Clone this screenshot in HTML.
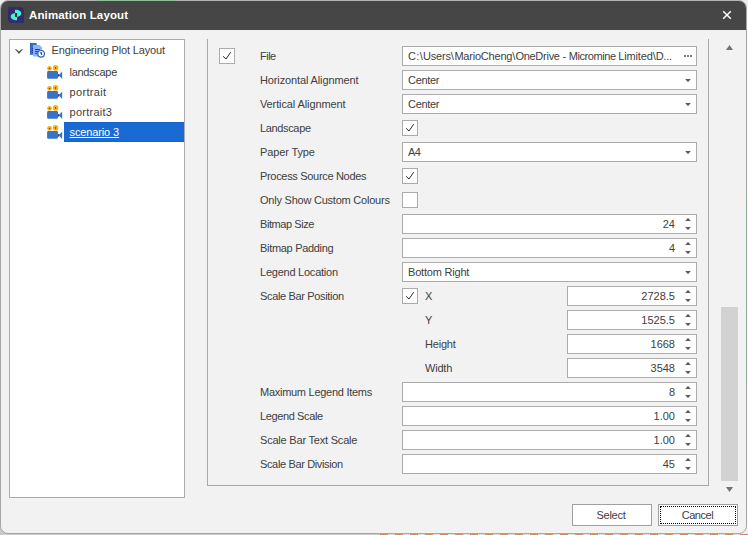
<!DOCTYPE html><html><head><meta charset="utf-8"><title>Animation Layout</title><style>
*{box-sizing:border-box;margin:0;padding:0}
html,body{width:748px;height:535px;overflow:hidden;background:#d6d6d6}
body{background:linear-gradient(#ededed 0,#ededed 60%,#cbcbcb 100%)}
body{position:relative;font-family:"Liberation Sans",sans-serif;font-size:11px;color:#404040}
.abs{position:absolute}
#win{position:absolute;left:0;top:0;width:747px;height:534px;border:1px solid #a6a6a6;border-radius:8px;background:#f2f2f2;overflow:hidden}
#title{position:absolute;left:0;top:0;width:745px;height:29px;background:#464646}
#title .t{position:absolute;left:28px;top:7px;font-weight:bold;font-size:11.5px;color:#fff;white-space:nowrap;line-height:14px}
.lbl{position:absolute;white-space:nowrap;line-height:14px;height:14px}
.inp{position:absolute;height:20px;border:1px solid #ababab;background:#fff}
.inp .v{position:absolute;top:2px;line-height:14px;white-space:nowrap}
.cb{position:absolute;width:16px;height:16px;border:1px solid #ababab;background:#fff}
.btn{position:absolute;height:22px;width:80px;border:1px solid #a0a0a0;background:#fff;text-align:center;line-height:20px}
</style></head><body>
<div class="abs" style="left:736px;top:522px;width:12px;height:13px;background:#f3f1ef"></div>
<div class="abs" style="left:736px;top:0;width:12px;height:12px;background:#ececec"></div>
<div id="win">
<div id="title"><svg class="abs" style="left:7px;top:6px" width="16" height="16" viewBox="0 0 16 16"><path d="M0 0H14L16 2V16H2L0 14Z" fill="#352a6a"/><path d="M7 2.800C10 2.600 13.400 4.200 13.300 6.600C13.200 8.600 11 9.600 9.100 10V6.100H7Z" fill="#4cf0cc"/><path d="M9.100 13.200C6 13.400 2.600 11.800 2.700 9.400C2.800 7.400 5 6.400 7 6V9.900H9.100Z" fill="#4cf0cc"/></svg><div class="t" style="letter-spacing:0.130px">Animation Layout</div>
<svg class="abs" style="left:721px;top:9px" width="10" height="10" viewBox="0 0 10 10"><path d="M1.200 1.200L8.800 8.800M8.800 1.200L1.200 8.800" stroke="#fff" stroke-width="1.500" fill="none"/></svg></div>
<div class="abs" id="tree" style="left:8px;top:38px;width:176px;height:459px;border:1px solid #ababab;background:#fff"></div>
<svg class="abs" style="left:13px;top:46px" width="10" height="8" viewBox="0 0 10 8"><path d="M1 2.200L2 1.900L5 4.600L8 1.900L9 2.200L5 6.900Z" fill="#555"/></svg>
<svg class="abs" style="left:29px;top:42px" width="16" height="16" viewBox="0 0 16 16"><path d="M0 0H6L6.800 .8V11.800H0Z" fill="#3470c6"/><path d="M0 0H1V11.800H0Z" fill="#2c62c0"/><path d="M2 5h1v1h-1zM2 7h1v1h-1zM2 9h1v1h-1z" fill="#1a2fa0"/><path d="M3 1.900H9.500L12 4.500V13.600H3Z" fill="#89b3f8"/><path d="M5 6.500H9.800M5 8.400H8.500M5 10.300H7.800" stroke="#1c3faa" stroke-width="1"/><circle cx="11.100" cy="10.800" r="3.300" fill="#fff" stroke="#2d64c2" stroke-width="1.200"/><path d="M11 9L11.100 10.500L11.900 11.600" stroke="#222" stroke-width="1.100" fill="none"/></svg>
<div class="lbl" style="left:50.5px;top:42px;letter-spacing:-0.145px">Engineering Plot Layout</div>
<svg class="abs" style="left:46px;top:64px" width="16" height="15" viewBox="0 0 16 15"><circle cx="2.500" cy="3.400" r="2.400" fill="#fdb10f"/><circle cx="8.600" cy="2.900" r="2.800" fill="#fdb10f"/><circle cx="2.500" cy="3.400" r=".75" fill="#2b4f8c"/><rect x="8" y="2.100" width="1.100" height="1.700" fill="#2b4f8c"/><rect x="0.100" y="6" width="10.900" height="7.800" rx="1.400" fill="#3873c8"/><rect x="11" y="9.100" width="1.300" height="2.500" fill="#27406b"/><path d="M11.700 10.300L15.200 6.600V14Z" fill="#3873c8"/></svg>
<div class="lbl" style="left:68.5px;top:64px;letter-spacing:-0.3px">landscape</div>
<svg class="abs" style="left:46px;top:84px" width="16" height="15" viewBox="0 0 16 15"><circle cx="2.500" cy="3.400" r="2.400" fill="#fdb10f"/><circle cx="8.600" cy="2.900" r="2.800" fill="#fdb10f"/><circle cx="2.500" cy="3.400" r=".75" fill="#2b4f8c"/><rect x="8" y="2.100" width="1.100" height="1.700" fill="#2b4f8c"/><rect x="0.100" y="6" width="10.900" height="7.800" rx="1.400" fill="#3873c8"/><rect x="11" y="9.100" width="1.300" height="2.500" fill="#27406b"/><path d="M11.700 10.300L15.200 6.600V14Z" fill="#3873c8"/></svg>
<div class="lbl" style="left:68.5px;top:84px;letter-spacing:0.343px">portrait</div>
<svg class="abs" style="left:46px;top:104px" width="16" height="15" viewBox="0 0 16 15"><circle cx="2.500" cy="3.400" r="2.400" fill="#fdb10f"/><circle cx="8.600" cy="2.900" r="2.800" fill="#fdb10f"/><circle cx="2.500" cy="3.400" r=".75" fill="#2b4f8c"/><rect x="8" y="2.100" width="1.100" height="1.700" fill="#2b4f8c"/><rect x="0.100" y="6" width="10.900" height="7.800" rx="1.400" fill="#3873c8"/><rect x="11" y="9.100" width="1.300" height="2.500" fill="#27406b"/><path d="M11.700 10.300L15.200 6.600V14Z" fill="#3873c8"/></svg>
<div class="lbl" style="left:68.5px;top:104px;letter-spacing:0.263px">portrait3</div>
<svg class="abs" style="left:46px;top:124px" width="16" height="15" viewBox="0 0 16 15"><circle cx="2.500" cy="3.400" r="2.400" fill="#fdb10f"/><circle cx="8.600" cy="2.900" r="2.800" fill="#fdb10f"/><circle cx="2.500" cy="3.400" r=".75" fill="#2b4f8c"/><rect x="8" y="2.100" width="1.100" height="1.700" fill="#2b4f8c"/><rect x="0.100" y="6" width="10.900" height="7.800" rx="1.400" fill="#3873c8"/><rect x="11" y="9.100" width="1.300" height="2.500" fill="#27406b"/><path d="M11.700 10.300L15.200 6.600V14Z" fill="#3873c8"/></svg>
<div class="abs" style="left:63px;top:121px;width:120px;height:20px;background:#1a6ad4;border-top:1px solid #1763cb;border-bottom:1px solid #1763cb"></div>
<div class="lbl" style="left:68.5px;top:124px;color:#fff;text-decoration:underline;letter-spacing:-0.122px">scenario 3</div>
<div class="abs" style="left:206px;top:38px;width:502px;height:447px;border:1px solid #a8a8a8;border-top:none"></div>
<div class="cb" style="left:218px;top:47px"><svg class="abs" style="left:0;top:0" width="14" height="14" viewBox="0 0 14 14"><path d="M3.100 7.300L6 10L10.700 3.200" stroke="#2a2a2a" stroke-width="1" fill="none"/></svg></div>
<div class="lbl" style="left:259px;top:48px;letter-spacing:-0.5px">File</div>
<div class="lbl" style="left:259px;top:72px;letter-spacing:-0.126px">Horizontal Alignment</div>
<div class="lbl" style="left:259px;top:96px;letter-spacing:-0.112px">Vertical Alignment</div>
<div class="lbl" style="left:259px;top:120px;letter-spacing:-0.35px">Landscape</div>
<div class="lbl" style="left:259px;top:144px;letter-spacing:-0.122px">Paper Type</div>
<div class="lbl" style="left:259px;top:168px;letter-spacing:-0.316px">Process Source Nodes</div>
<div class="lbl" style="left:259px;top:192px;letter-spacing:-0.226px">Only Show Custom Colours</div>
<div class="lbl" style="left:259px;top:216px;letter-spacing:-0.42px">Bitmap Size</div>
<div class="lbl" style="left:259px;top:240px;letter-spacing:-0.308px">Bitmap Padding</div>
<div class="lbl" style="left:259px;top:264px;letter-spacing:-0.236px">Legend Location</div>
<div class="lbl" style="left:259px;top:288px;letter-spacing:-0.341px">Scale Bar Position</div>
<div class="lbl" style="left:259px;top:384px;letter-spacing:-0.274px">Maximum Legend Items</div>
<div class="lbl" style="left:259px;top:408px;letter-spacing:-0.382px">Legend Scale</div>
<div class="lbl" style="left:259px;top:432px;letter-spacing:-0.205px">Scale Bar Text Scale</div>
<div class="lbl" style="left:259px;top:456px;letter-spacing:-0.359px">Scale Bar Division</div>
<div class="inp" style="left:401px;top:45px;width:295px"><div class="v" style="left:5px"><span style="letter-spacing:0.33px">C:\</span><span style="letter-spacing:-0.21px">Users</span><span style="letter-spacing:0.6px">\</span><span style="letter-spacing:-0.21px">MarioCheng</span><span style="letter-spacing:0.1px">\</span><span style="letter-spacing:-0.265px">OneDrive - </span><span style="letter-spacing:-0.42px">Micromine </span><span style="letter-spacing:-0.15px">Limited\</span><span style="letter-spacing:-0.21px">D...</span></div><svg class="abs" style="left:281px;top:8px" width="9" height="2" viewBox="0 0 9 2"><path d="M0 0h2v2h-2zM3 0h2v2h-2zM6 0h2v2h-2z" fill="#7a7a7a"/></svg></div>
<div class="inp" style="left:401px;top:69px;width:295px"><div class="v" style="left:5px;letter-spacing:-0.3px">Center</div><svg class="abs" style="left:282px;top:8px" width="6" height="3" viewBox="0 0 6 3"><path d="M.1 0H5.900L3 3.100Z" fill="#5c5c5c"/></svg></div>
<div class="inp" style="left:401px;top:93px;width:295px"><div class="v" style="left:5px;letter-spacing:-0.3px">Center</div><svg class="abs" style="left:282px;top:8px" width="6" height="3" viewBox="0 0 6 3"><path d="M.1 0H5.900L3 3.100Z" fill="#5c5c5c"/></svg></div>
<div class="cb" style="left:401px;top:119px"><svg class="abs" style="left:0;top:0" width="14" height="14" viewBox="0 0 14 14"><path d="M3.100 7.300L6 10L10.700 3.200" stroke="#2a2a2a" stroke-width="1" fill="none"/></svg></div>
<div class="inp" style="left:401px;top:141px;width:295px"><div class="v" style="left:5px;letter-spacing:-0.6px">A4</div><svg class="abs" style="left:282px;top:8px" width="6" height="3" viewBox="0 0 6 3"><path d="M.1 0H5.900L3 3.100Z" fill="#5c5c5c"/></svg></div>
<div class="cb" style="left:401px;top:167px"><svg class="abs" style="left:0;top:0" width="14" height="14" viewBox="0 0 14 14"><path d="M3.100 7.300L6 10L10.700 3.200" stroke="#2a2a2a" stroke-width="1" fill="none"/></svg></div>
<div class="cb" style="left:401px;top:191px"></div>
<div class="inp" style="left:401px;top:213px;width:295px"><div class="v" style="right:21px;letter-spacing:0">24</div><svg class="abs" style="left:282px;top:3px" width="6" height="3" viewBox="0 0 6 3"><path d="M.1 3H5.900L3 -.1Z" fill="#5c5c5c"/></svg><svg class="abs" style="left:282px;top:12px" width="6" height="3" viewBox="0 0 6 3"><path d="M.1 0H5.900L3 3.100Z" fill="#5c5c5c"/></svg></div>
<div class="inp" style="left:401px;top:237px;width:295px"><div class="v" style="right:21px;letter-spacing:0">4</div><svg class="abs" style="left:282px;top:3px" width="6" height="3" viewBox="0 0 6 3"><path d="M.1 3H5.900L3 -.1Z" fill="#5c5c5c"/></svg><svg class="abs" style="left:282px;top:12px" width="6" height="3" viewBox="0 0 6 3"><path d="M.1 0H5.900L3 3.100Z" fill="#5c5c5c"/></svg></div>
<div class="inp" style="left:401px;top:261px;width:295px"><div class="v" style="left:5px;letter-spacing:-0.2px">Bottom Right</div><svg class="abs" style="left:282px;top:8px" width="6" height="3" viewBox="0 0 6 3"><path d="M.1 0H5.900L3 3.100Z" fill="#5c5c5c"/></svg></div>
<div class="cb" style="left:401px;top:287px"><svg class="abs" style="left:0;top:0" width="14" height="14" viewBox="0 0 14 14"><path d="M3.100 7.300L6 10L10.700 3.200" stroke="#2a2a2a" stroke-width="1" fill="none"/></svg></div>
<div class="lbl" style="left:424px;top:288px;letter-spacing:-0.200px">X</div>
<div class="inp" style="left:566px;top:285px;width:130px"><div class="v" style="right:21px;letter-spacing:0">2728.5</div><svg class="abs" style="left:117px;top:3px" width="6" height="3" viewBox="0 0 6 3"><path d="M.1 3H5.900L3 -.1Z" fill="#5c5c5c"/></svg><svg class="abs" style="left:117px;top:12px" width="6" height="3" viewBox="0 0 6 3"><path d="M.1 0H5.900L3 3.100Z" fill="#5c5c5c"/></svg></div>
<div class="lbl" style="left:424px;top:312px;letter-spacing:-0.200px">Y</div>
<div class="inp" style="left:566px;top:309px;width:130px"><div class="v" style="right:21px;letter-spacing:0">1525.5</div><svg class="abs" style="left:117px;top:3px" width="6" height="3" viewBox="0 0 6 3"><path d="M.1 3H5.900L3 -.1Z" fill="#5c5c5c"/></svg><svg class="abs" style="left:117px;top:12px" width="6" height="3" viewBox="0 0 6 3"><path d="M.1 0H5.900L3 3.100Z" fill="#5c5c5c"/></svg></div>
<div class="lbl" style="left:424px;top:336px;letter-spacing:-0.200px">Height</div>
<div class="inp" style="left:566px;top:333px;width:130px"><div class="v" style="right:21px;letter-spacing:0">1668</div><svg class="abs" style="left:117px;top:3px" width="6" height="3" viewBox="0 0 6 3"><path d="M.1 3H5.900L3 -.1Z" fill="#5c5c5c"/></svg><svg class="abs" style="left:117px;top:12px" width="6" height="3" viewBox="0 0 6 3"><path d="M.1 0H5.900L3 3.100Z" fill="#5c5c5c"/></svg></div>
<div class="lbl" style="left:424px;top:360px;letter-spacing:-0.200px">Width</div>
<div class="inp" style="left:566px;top:357px;width:130px"><div class="v" style="right:21px;letter-spacing:0">3548</div><svg class="abs" style="left:117px;top:3px" width="6" height="3" viewBox="0 0 6 3"><path d="M.1 3H5.900L3 -.1Z" fill="#5c5c5c"/></svg><svg class="abs" style="left:117px;top:12px" width="6" height="3" viewBox="0 0 6 3"><path d="M.1 0H5.900L3 3.100Z" fill="#5c5c5c"/></svg></div>
<div class="inp" style="left:401px;top:381px;width:295px"><div class="v" style="right:21px;letter-spacing:0">8</div><svg class="abs" style="left:282px;top:3px" width="6" height="3" viewBox="0 0 6 3"><path d="M.1 3H5.900L3 -.1Z" fill="#5c5c5c"/></svg><svg class="abs" style="left:282px;top:12px" width="6" height="3" viewBox="0 0 6 3"><path d="M.1 0H5.900L3 3.100Z" fill="#5c5c5c"/></svg></div>
<div class="inp" style="left:401px;top:405px;width:295px"><div class="v" style="right:21px;letter-spacing:0">1.00</div><svg class="abs" style="left:282px;top:3px" width="6" height="3" viewBox="0 0 6 3"><path d="M.1 3H5.900L3 -.1Z" fill="#5c5c5c"/></svg><svg class="abs" style="left:282px;top:12px" width="6" height="3" viewBox="0 0 6 3"><path d="M.1 0H5.900L3 3.100Z" fill="#5c5c5c"/></svg></div>
<div class="inp" style="left:401px;top:429px;width:295px"><div class="v" style="right:21px;letter-spacing:0">1.00</div><svg class="abs" style="left:282px;top:3px" width="6" height="3" viewBox="0 0 6 3"><path d="M.1 3H5.900L3 -.1Z" fill="#5c5c5c"/></svg><svg class="abs" style="left:282px;top:12px" width="6" height="3" viewBox="0 0 6 3"><path d="M.1 0H5.900L3 3.100Z" fill="#5c5c5c"/></svg></div>
<div class="inp" style="left:401px;top:453px;width:295px"><div class="v" style="right:21px;letter-spacing:0">45</div><svg class="abs" style="left:282px;top:3px" width="6" height="3" viewBox="0 0 6 3"><path d="M.1 3H5.900L3 -.1Z" fill="#5c5c5c"/></svg><svg class="abs" style="left:282px;top:12px" width="6" height="3" viewBox="0 0 6 3"><path d="M.1 0H5.900L3 3.100Z" fill="#5c5c5c"/></svg></div>
<div class="abs" style="left:720px;top:306px;width:17px;height:174px;background:#d2d2d2"></div>
<svg class="abs" style="left:724px;top:44px" width="9" height="6" viewBox="0 0 9 6"><path d="M1 5L4.500 0L8 5z" fill="#727272"/></svg>
<svg class="abs" style="left:724px;top:486px" width="9" height="6" viewBox="0 0 9 6"><path d="M1 0L4.500 5L8 0z" fill="#727272"/></svg>
<div class="btn" style="left:571px;top:503px;padding-right:2px;letter-spacing:-0.24px">Select</div>
<div class="btn" style="left:657px;top:503px;padding-right:1px;letter-spacing:-0.44px">Cancel<div class="abs" style="left:1px;top:1px;width:76px;height:18px;border:1px dotted #000"></div></div>
</div>
<div class="abs" style="left:380px;top:534px;width:368px;height:1px;background:repeating-linear-gradient(90deg,#db8256 0 8px,#e2e2e2 8px 15px)"></div>
<div class="abs" style="left:747px;top:6px;width:1px;height:522px;background:#fafafa"></div>
<div class="abs" style="left:8px;top:0;width:731px;height:1px;background:#b4b4b4"></div>
<div class="abs" style="left:97px;top:0;width:79px;height:1px;background:#8fc09a"></div>
<div class="abs" style="left:746px;top:200px;width:1px;height:185px;background:#86ab8e"></div>
</body></html>
